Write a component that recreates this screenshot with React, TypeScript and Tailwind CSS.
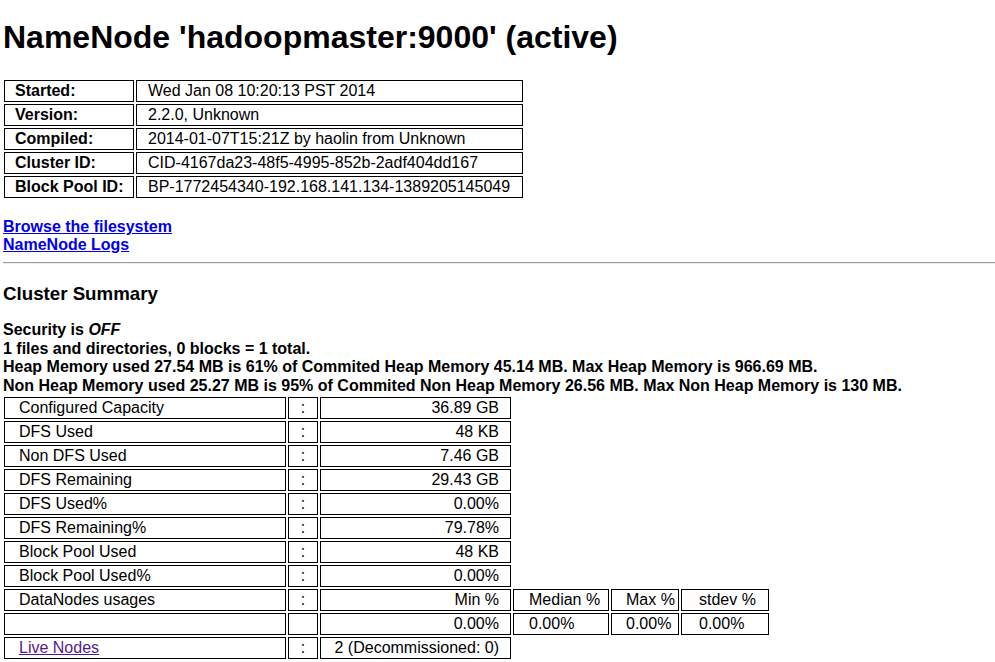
import React from "react";

const cell = "border border-black p-0 leading-[20px] h-[22px] align-middle whitespace-nowrap";

type Row = { label: React.ReactNode; value: string };

const summaryRows: Row[] = [
  { label: "Configured Capacity", value: "36.89 GB" },
  { label: "DFS Used", value: "48 KB" },
  { label: "Non DFS Used", value: "7.46 GB" },
  { label: "DFS Remaining", value: "29.43 GB" },
  { label: "DFS Used%", value: "0.00%" },
  { label: "DFS Remaining%", value: "79.78%" },
  { label: "Block Pool Used", value: "48 KB" },
  { label: "Block Pool Used%", value: "0.00%" },
];

const link = (text: string) => (
  <a href="#" className="text-[#551A8B] underline">
    {text}
  </a>
);

const tailRows: Row[] = [
  { label: link("Live Nodes"), value: "2 (Decommissioned: 0)" },
];

export default function App() {
  const info: [string, string][] = [
    ["Started:", "Wed Jan 08 10:20:13 PST 2014"],
    ["Version:", "2.2.0, Unknown"],
    ["Compiled:", "2014-01-07T15:21Z by haolin from Unknown"],
    ["Cluster ID:", "CID-4167da23-48f5-4995-852b-2adf404dd167"],
    ["Block Pool ID:", "BP-1772454340-192.168.141.134-1389205145049"],
  ];

  const c1 = `${cell} w-[282px] pl-[14px] text-left`;
  const c2 = `${cell} w-[30px] text-center`;
  const c3 = `${cell} w-[191px] pr-[11px] text-right`;
  const c4 = `${cell} w-[96px] pl-[15px] text-left`;
  const c5 = `${cell} w-[68px] pl-[14px] text-left`;
  const c6 = `${cell} w-[88px] pl-[17px] text-left`;

  return (
    <div className="min-h-[662px] overflow-hidden bg-white pl-[3px] font-['Liberation_Sans',Arial,Helvetica,sans-serif] text-[16px] text-black">
      <h1 className="mt-[19px] mb-[22px] text-[32px] font-bold leading-[37px]">
        NameNode 'hadoopmaster:9000' (active)
      </h1>

      <table className="-ml-px border-separate border-spacing-[2px]">
        <tbody>
          {info.map(([k, v]) => (
            <tr key={k}>
              <td className={`${cell} w-[130px] pl-[10px] font-bold`}>{k}</td>
              <td className={`${cell} w-[387px] pl-[11px]`}>{v}</td>
            </tr>
          ))}
        </tbody>
      </table>

      <div className="mt-[18px] font-bold leading-[18px]">
        <a href="#" className="block w-fit text-[#0000EE] underline">
          Browse the filesystem
        </a>
        <a href="#" className="block w-fit text-[#0000EE] underline">
          NameNode Logs
        </a>
      </div>

      <hr className="mt-[8px] h-0 border-t border-b border-t-[#9a9a9a] border-b-[#eeeeee]" />

      <h3 className="mt-[19px] text-[18.72px] font-bold leading-[22px]">Cluster Summary</h3>

      <div className="mt-[16px] font-bold leading-[18.5px]">
        <div>
          Security is <i>OFF</i>
        </div>
        <div>1 files and directories, 0 blocks = 1 total.</div>
        <div>
          Heap Memory used 27.54 MB is 61% of Commited Heap Memory 45.14 MB. Max Heap Memory is 966.69 MB.
        </div>
        <div>
          Non Heap Memory used 25.27 MB is 95% of Commited Non Heap Memory 26.56 MB. Max Non Heap Memory is 130 MB.
        </div>
      </div>

      <table className="-ml-px border-separate border-spacing-[2px]">
        <tbody>
          {summaryRows.map((r, i) => (
            <tr key={i}>
              <td className={c1}>{r.label}</td>
              <td className={c2}>:</td>
              <td className={c3}>{r.value}</td>
            </tr>
          ))}
          <tr>
            <td className={c1}>DataNodes usages</td>
            <td className={c2}>:</td>
            <td className={c3}>Min %</td>
            <td className={c4}>Median %</td>
            <td className={c5}>Max %</td>
            <td className={c6}>stdev %</td>
          </tr>
          <tr>
            <td className={c1}></td>
            <td className={c2}></td>
            <td className={c3}>0.00%</td>
            <td className={c4}>0.00%</td>
            <td className={c5}>0.00%</td>
            <td className={c6}>0.00%</td>
          </tr>
          {tailRows.map((r, i) => (
            <tr key={`t${i}`}>
              <td className={c1}>{r.label}</td>
              <td className={c2}>:</td>
              <td className={c3}>{r.value}</td>
            </tr>
          ))}
        </tbody>
      </table>
    </div>
  );
}
